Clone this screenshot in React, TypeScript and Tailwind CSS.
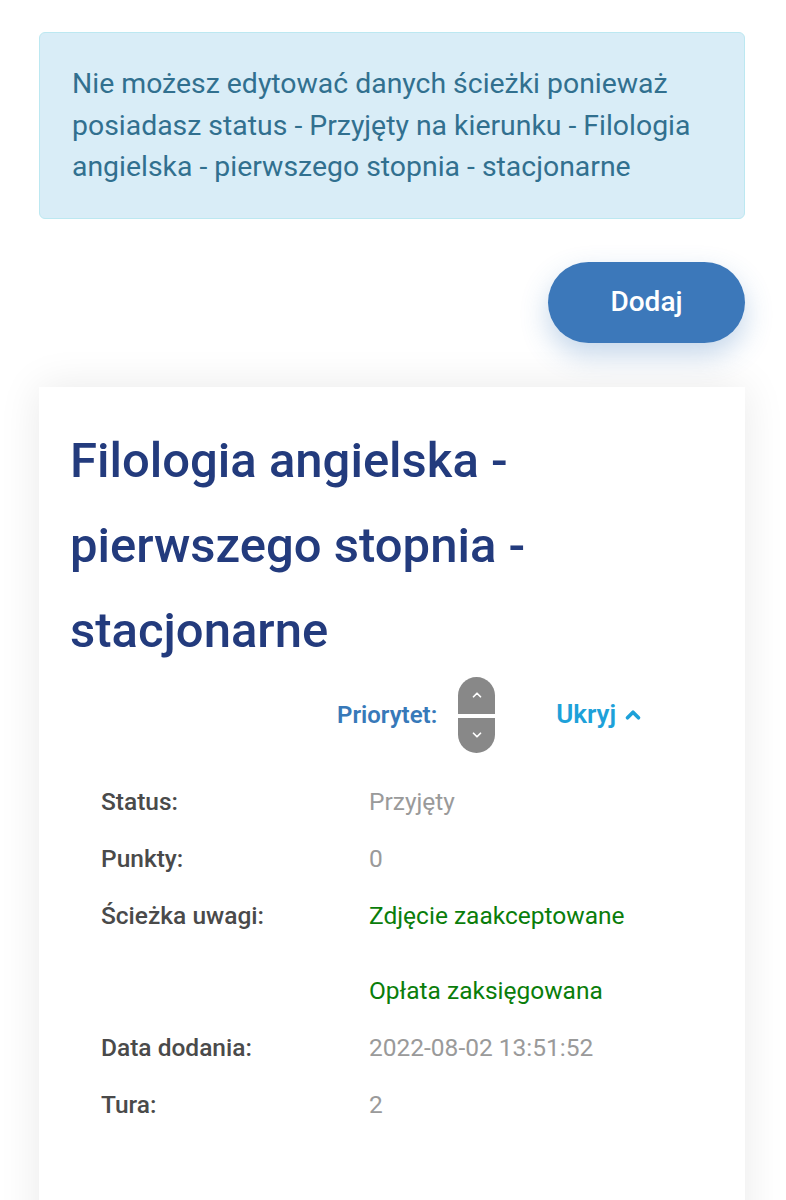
import { ChevronUp, ChevronDown } from 'lucide-react';

const details = [
  { label: 'Status:', values: ['Przyjęty'], tone: 'muted' },
  { label: 'Punkty:', values: ['0'], tone: 'muted' },
  { label: 'Ścieżka uwagi:', values: ['Zdjęcie zaakceptowane', 'Opłata zaksięgowana'], tone: 'ok' },
  { label: 'Data dodania:', values: ['2022-08-02 13:51:52'], tone: 'muted' },
  { label: 'Tura:', values: ['2'], tone: 'muted' },
];

export default function App() {
  return (
    <div className="min-h-[1200px] bg-white pl-[39px] pr-[41px] pt-[32px] font-['Roboto',sans-serif]">
      {/* Info alert */}
      <div className="rounded-md border border-[#bce8f1] bg-[#d9edf7] px-[32px] py-[30px] text-[28.4px] leading-[41.5px] text-[#31708f]">
        Nie możesz edytować danych ścieżki ponieważ posiadasz status - Przyjęty na kierunku - Filologia angielska - pierwszego stopnia - stacjonarne
      </div>

      <div className="mt-[43px] flex justify-end">
        <button className="h-[81px] w-[197px] rounded-full bg-[#3c78ba] text-[28px] font-medium text-white shadow-[0_12px_28px_rgba(60,120,186,0.3)]">
          Dodaj
        </button>
      </div>

      {/* Path card */}
      <div className="mt-[44px] bg-white px-[31px] pt-[31px] pb-[120px] shadow-[0_0_40px_rgba(0,0,0,0.09)]">
        <h2 className="text-[49px] font-medium leading-[85px] text-[#233b7d]">
          Filologia angielska - pierwszego stopnia - stacjonarne
        </h2>

        <div className="mt-[4px] flex items-center pl-[267px]">
          <span className="text-[24px] font-semibold text-[#3779b9]">Priorytet:</span>
          <div className="ml-[21px] flex w-[37px] flex-col gap-[4px]">
            <button className="flex h-[37px] items-center justify-center rounded-t-full bg-[#888888] text-white">
              <ChevronUp size={14} strokeWidth={3} />
            </button>
            <button className="flex h-[35px] items-center justify-center rounded-b-full bg-[#888888] text-white">
              <ChevronDown size={14} strokeWidth={3} />
            </button>
          </div>
          <button className="ml-[61px] flex items-center gap-[6px] text-[26px] font-semibold text-[#1da1d9]">
            Ukryj
            <ChevronUp size={22} strokeWidth={4} />
          </button>
        </div>

        <div className="mt-[20px] pl-[31px] text-[24.5px] leading-[57px]">
          {details.map((row) => (
            <div key={row.label} className="grid grid-cols-[268px_1fr]">
              <div className="font-medium text-[#4a4a4a]">{row.label}</div>
              <div className="flex flex-col gap-[18px]">
                {row.values.map((v) => (
                  <div key={v} className={row.tone === 'ok' ? 'text-[#0a7d0a]' : 'text-[#9a9a9a]'}>
                    {v}
                  </div>
                ))}
              </div>
            </div>
          ))}
        </div>
      </div>
    </div>
  );
}
